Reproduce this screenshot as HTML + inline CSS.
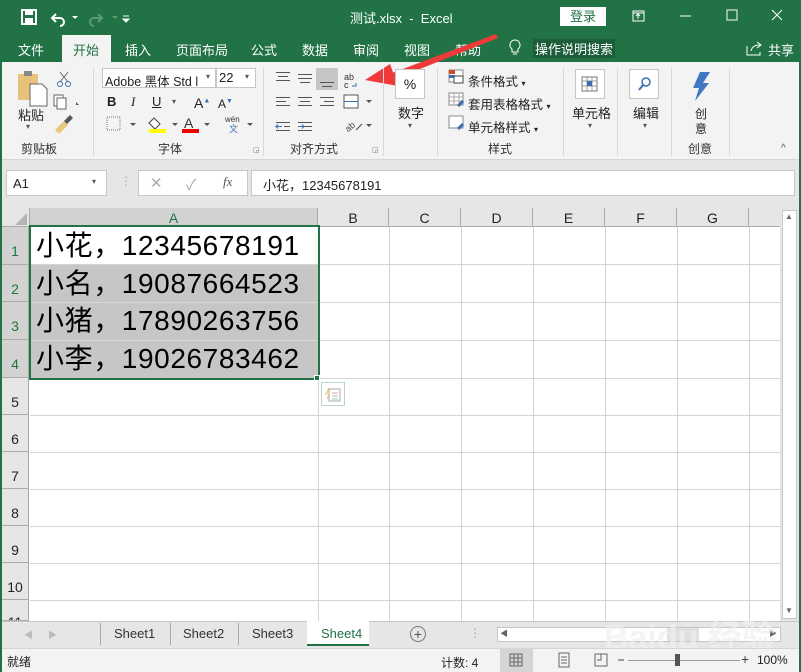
<!DOCTYPE html>
<html><head><meta charset="utf-8"><style>
*{margin:0;padding:0;box-sizing:border-box}
body{width:801px;height:672px;overflow:hidden;position:relative;background:#fff;font-family:"Liberation Sans","Noto Sans CJK SC",sans-serif;font-size:12px;color:#222}
.a{position:absolute}
.t{position:absolute;white-space:nowrap}
.vl{position:absolute;width:1px;background:#d4d4d4}
.hl{position:absolute;height:1px;background:#d4d4d4}
.ch{position:absolute;top:208px;height:19px;text-align:center;font-size:14px;color:#222;line-height:20px;border-right:1px solid #ababab;border-bottom:1px solid #ababab;background:#e6e6e6}
.rh{position:absolute;left:2px;width:27px;text-align:center;font-size:14px;color:#222;border-bottom:1px solid #ababab;border-right:1px solid #ababab;background:#e6e6e6;padding-top:16px}
.cell{position:absolute;left:30px;width:288px;font-size:28px;color:#000;padding-left:6px;line-height:37px;letter-spacing:0.6px}
.sep{position:absolute;top:68px;width:1px;height:88px;background:#d8d8d8}
.lbl{position:absolute;top:140px;font-size:12px;color:#333}
.tab{position:absolute;top:40px;color:#fff;font-size:13px;white-space:nowrap}
</style></head><body>
<div class="a" style="left:0;top:0;width:801px;height:62px;background:#217346"></div>
<svg class="a" style="left:20px;top:8px" width="120" height="20">
<rect x="2" y="2" width="14" height="14" fill="none" stroke="#fff" stroke-width="2"/><rect x="5" y="2" width="8" height="5" fill="#fff"/><rect x="5" y="10" width="8" height="6" fill="#fff"/>
<path d="M36 6 l-4 4 l4 4 M32 10 h8 a4 4 0 0 1 0 8" fill="none" stroke="#fff" stroke-width="2"/>
<path d="M52 8 l3 3 l3-3z" fill="#fff"/>
<path d="M78 6 l4 4 l-4 4 M82 10 h-8 a4 4 0 0 0 0 8" fill="none" stroke="#5c9a77" stroke-width="2"/>
<path d="M92 8 l3 3 l3-3z" fill="#5c9a77"/>
<path d="M103 8 h6 M103 11 l3 3 l3-3z" fill="#fff" stroke="#fff"/>
</svg>
<div class="t" style="left:350px;top:8px;color:#fff;font-size:13px">测试.xlsx&nbsp; -&nbsp; Excel</div>
<div class="a" style="left:560px;top:7px;width:46px;height:19px;background:#fff;color:#217346;text-align:center;font-size:13px;line-height:19px">登录</div>
<svg class="a" style="left:630px;top:6px" width="170" height="22">
<rect x="3" y="5" width="11" height="10" fill="none" stroke="#fff"/><path d="M3 7h11 M8 13v-5 l-2 2 M8 8l2 2" stroke="#fff" fill="none"/>
<path d="M50 10h11" stroke="#fff"/>
<rect x="97" y="4" width="10" height="10" fill="none" stroke="#fff"/>
<path d="M142 4l10 10 M152 4l-10 10" stroke="#fff"/>
</svg>
<div class="a" style="left:62px;top:35px;width:49px;height:27px;background:#f3f3f3"></div>
<div class="tab" style="left:18px">文件</div>
<div class="tab" style="left:73px;color:#217346">开始</div>
<div class="tab" style="left:125px">插入</div>
<div class="tab" style="left:176px">页面布局</div>
<div class="tab" style="left:251px">公式</div>
<div class="tab" style="left:302px">数据</div>
<div class="tab" style="left:353px">审阅</div>
<div class="tab" style="left:404px">视图</div>
<div class="tab" style="left:455px">帮助</div>
<svg class="a" style="left:508px;top:39px" width="14" height="18"><path d="M7 1a5 5 0 0 0-3 9v3h6v-3a5 5 0 0 0-3-9z M5 15h4" fill="none" stroke="#fff"/></svg>
<div class="t" style="left:533px;top:39px;color:#fff;font-size:13px;background:#1c5e3a;padding:0 2px">操作说明搜索</div>
<svg class="a" style="left:745px;top:40px" width="18" height="16"><path d="M2 6v9h13v-3 M6 11c1-5 5-6 9-6 M12 2l4 3-4 3" fill="none" stroke="#fff"/></svg>
<div class="tab" style="left:768px">共享</div>
<div class="a" style="left:0;top:62px;width:801px;height:98px;background:#f3f3f3;border-bottom:1px solid #d5d5d5"></div>
<div class="a" style="left:0;top:62px;width:2px;height:610px;background:#217346"></div>
<div class="a" style="right:0;top:62px;width:2px;height:610px;background:#217346"></div>
<svg class="a" style="left:16px;top:70px" width="60" height="40">
<rect x="2" y="4" width="20" height="26" fill="#e8c27a"/><rect x="8" y="1" width="8" height="5" fill="#888"/><path d="M14 14h12l5 5v17h-17z" fill="#fff" stroke="#666"/>
<path d="M44 2l8 10 M52 2l-8 10" stroke="#666"/><circle cx="44" cy="14" r="2.5" fill="none" stroke="#3a6fb0"/><circle cx="52" cy="14" r="2.5" fill="none" stroke="#3a6fb0"/>
</svg>
<div class="t" style="left:18px;top:105px;font-size:13px">粘贴</div>
<div class="t" style="left:26px;top:122px;font-size:8px;color:#555">▾</div>
<svg class="a" style="left:52px;top:93px" width="30" height="40"><rect x="2" y="2" width="9" height="11" fill="#fff" stroke="#666"/><rect x="5" y="5" width="9" height="11" fill="#fff" stroke="#666"/><path d="M24 9l3 3-3 0z" fill="#555"/><path d="M3 37l9-9 4 4-9 9z" fill="#e9c77e"/><path d="M12 28l6-6 3 3-6 6z" fill="#555"/></svg>
<div class="lbl" style="left:21px">剪贴板</div>
<div class="sep" style="left:93px"></div>
<div class="a" style="left:102px;top:68px;width:114px;height:20px;background:#fff;border:1px solid #c6c6c6"></div>
<div class="t" style="left:105px;top:71px;font-size:12.5px">Adobe 黑体 Std l</div>
<div class="t" style="left:206px;top:72px;font-size:8px;color:#555">▾</div>
<div class="a" style="left:216px;top:68px;width:40px;height:20px;background:#fff;border:1px solid #c6c6c6"></div>
<div class="t" style="left:219px;top:70px;font-size:13px">22</div>
<div class="t" style="left:245px;top:72px;font-size:8px;color:#555">▾</div>
<div class="t" style="left:107px;top:94px;font-size:13px;font-weight:bold">B</div>
<div class="t" style="left:131px;top:94px;font-size:13px;font-style:italic;font-family:'Liberation Serif'">I</div>
<div class="t" style="left:152px;top:94px;font-size:13px;text-decoration:underline">U</div>
<div class="t" style="left:172px;top:97px;font-size:8px;color:#555">▾</div>
<div class="t" style="left:194px;top:95px;font-size:14px">A<sup style="font-size:7px;color:#3a6fb0">▲</sup></div>
<div class="t" style="left:218px;top:97px;font-size:12px">A<sup style="font-size:7px;color:#3a6fb0">▼</sup></div>
<svg class="a" style="left:104px;top:114px" width="170" height="22">
<rect x="3" y="3" width="13" height="13" fill="none" stroke="#777" stroke-dasharray="1,1"/><path d="M26 9l3 3 3-3z" fill="#555"/>
<path d="M50 4l6 6-5 5-6-6z" fill="#fff" stroke="#444"/><rect x="45" y="15" width="17" height="4" fill="#ffff00"/><path d="M68 9l3 3 3-3z" fill="#555"/>
<text x="80" y="14" font-size="14" fill="#333" font-family="Liberation Sans">A</text><rect x="78" y="15" width="17" height="4" fill="#e00"/><path d="M100 9l3 3 3-3z" fill="#555"/>
<text x="121" y="8" font-size="8" fill="#333" font-family="Liberation Sans">wén</text><text x="125" y="18" font-size="9" fill="#3a6fb0" font-family="Noto Sans CJK SC">文</text><path d="M143 9l3 3 3-3z" fill="#555"/>
</svg>
<div class="lbl" style="left:158px">字体</div>
<div class="t" style="left:253px;top:146px;font-size:7px;color:#777">◲</div>
<div class="sep" style="left:263px"></div>
<div class="a" style="left:316px;top:68px;width:22px;height:22px;background:#c6c6c6"></div>
<svg class="a" style="left:272px;top:68px" width="110" height="66">
<g stroke="#555"><path d="M4 4.5h14M6 8.5h10M4 12.5h14"/><path d="M26 8.5h14M26 12.5h14M28 16.5h10" transform="translate(0,-2)"/><path d="M48 14.5h14M50 18.5h10"/>
<path d="M4 29.5h14M4 33.5h10M4 37.5h14M26 29.5h14M28 33.5h10M26 37.5h14M48 29.5h14M52 33.5h10M48 37.5h14"/>
<path d="M4 54.5h14M12 58.5h6M4 62.5h14M26 54.5h14M32 58.5h8M26 62.5h14"/></g>
<path d="M10 58.5h-6 l2-2 m-2 2 l2 2 M26 58.5h6 l-2-2 m2 2 l-2 2" stroke="#3a6fb0" fill="none"/>
<text x="72" y="12" font-size="9" fill="#333" font-family="Liberation Sans">ab</text><text x="72" y="20" font-size="9" fill="#333" font-family="Liberation Sans">c</text><path d="M84 15v3h-4" stroke="#3a6fb0" fill="none"/>
<rect x="72" y="27" width="14" height="13" fill="#fff" stroke="#555"/><path d="M72 33.5h14" stroke="#3a6fb0"/><path d="M94 32l3 3 3-3z" fill="#555"/>
<text x="72" y="63" font-size="9" fill="#444" transform="rotate(-40 76 58)" font-family="Liberation Sans">ab</text><path d="M84 62l6-6" stroke="#444"/><path d="M94 56l3 3 3-3z" fill="#555"/>
</svg>
<div class="lbl" style="left:290px">对齐方式</div>
<div class="t" style="left:372px;top:146px;font-size:7px;color:#777">◲</div>
<svg class="a" style="left:360px;top:30px" width="140" height="60"><path d="M136 4 L24 46 L27 52 L138 8z" fill="#f03a3a"/><path d="M5 50 L30 34 L38 56z" fill="#f03a3a"/></svg>
<div class="sep" style="left:383px"></div>
<div class="a" style="left:395px;top:69px;width:30px;height:30px;background:#fff;border:1px solid #c6c6c6;text-align:center;font-size:14px;line-height:28px">%</div>
<div class="t" style="left:398px;top:103px;font-size:13px">数字</div>
<div class="t" style="left:408px;top:121px;font-size:8px;color:#555">▾</div>
<div class="sep" style="left:437px"></div>
<svg class="a" style="left:448px;top:69px" width="18" height="64"><rect x="1" y="1" width="14" height="12" fill="#fff" stroke="#888"/><rect x="1" y="1" width="6" height="4" fill="#d04a2a"/><rect x="1" y="6" width="6" height="3" fill="#3a6fb0"/><rect x="6" y="7" width="9" height="7" fill="#fff" stroke="#444"/>
<rect x="1" y="24" width="14" height="12" fill="#fff" stroke="#888"/><path d="M1 28h14M1 32h14M6 24v12M11 24v12" stroke="#aaa"/><path d="M10 37l5-5" stroke="#3a6fb0" stroke-width="3"/>
<rect x="1" y="47" width="14" height="12" fill="#fff" stroke="#888"/><path d="M10 60l5-5" stroke="#3a6fb0" stroke-width="3"/></svg>
<div class="t" style="left:468px;top:71px;font-size:12.5px">条件格式 <span style="font-size:8px">▾</span></div>
<div class="t" style="left:468px;top:94px;font-size:12.5px">套用表格格式 <span style="font-size:8px">▾</span></div>
<div class="t" style="left:468px;top:117px;font-size:12.5px">单元格样式 <span style="font-size:8px">▾</span></div>
<div class="lbl" style="left:488px">样式</div>
<div class="sep" style="left:563px"></div>
<div class="a" style="left:575px;top:69px;width:30px;height:30px;background:#fff;border:1px solid #c6c6c6"></div>
<svg class="a" style="left:581px;top:75px" width="20" height="20"><rect x="1" y="2" width="15" height="14" fill="none" stroke="#777"/><path d="M1 6h15M1 11h15M6 2v14M11 2v14" stroke="#999"/><rect x="6" y="6" width="5" height="5" fill="#3a6fb0"/></svg>
<div class="t" style="left:572px;top:103px;font-size:13px">单元格</div>
<div class="t" style="left:588px;top:121px;font-size:8px;color:#555">▾</div>
<div class="sep" style="left:617px"></div>
<div class="a" style="left:629px;top:69px;width:30px;height:30px;background:#fff;border:1px solid #c6c6c6"></div>
<svg class="a" style="left:636px;top:75px" width="18" height="18"><circle cx="10" cy="7" r="4" fill="none" stroke="#3a6fb0" stroke-width="1.5"/><path d="M7 10l-4 5" stroke="#3a6fb0" stroke-width="2"/></svg>
<div class="t" style="left:633px;top:103px;font-size:13px">编辑</div>
<div class="t" style="left:643px;top:121px;font-size:8px;color:#555">▾</div>
<div class="sep" style="left:671px"></div>
<svg class="a" style="left:690px;top:71px" width="22" height="32"><path d="M10 1h10l-7 11h6l-14 18 4-13h-6z" fill="#3f78c0"/></svg>
<div class="t" style="left:695px;top:105px;font-size:12px">创</div>
<div class="t" style="left:695px;top:120px;font-size:12px">意</div>
<div class="lbl" style="left:688px">创意</div>
<div class="sep" style="left:729px"></div>
<div class="t" style="left:781px;top:143px;font-size:10px;color:#555">^</div>
<div class="a" style="left:2px;top:160px;width:797px;height:48px;background:#e6e6e6"></div>
<div class="a" style="left:6px;top:170px;width:101px;height:26px;background:#fff;border:1px solid #c6c6c6"></div>
<div class="t" style="left:13px;top:176px;font-size:13px">A1</div>
<div class="t" style="left:92px;top:177px;font-size:8px;color:#555">▾</div>
<div class="t" style="left:120px;top:174px;font-size:12px;color:#aaa">⋮</div>
<div class="a" style="left:138px;top:170px;width:110px;height:26px;background:#fff;border:1px solid #c6c6c6"></div>
<div class="t" style="left:150px;top:174px;font-size:15px;color:#aaa">✕</div>
<div class="t" style="left:186px;top:174px;font-size:15px;color:#aaa">✓</div>
<div class="t" style="left:223px;top:174px;font-size:13px;font-style:italic;font-family:'Liberation Serif';color:#555">fx</div>
<div class="a" style="left:251px;top:170px;width:544px;height:26px;background:#fff;border:1px solid #c6c6c6"></div>
<div class="t" style="left:263px;top:175px;font-size:13px">小花，12345678191</div>
<div class="a" style="left:2px;top:208px;width:28px;height:19px;background:#e6e6e6;border-right:1px solid #ababab;border-bottom:1px solid #ababab"></div>
<svg class="a" style="left:14px;top:212px" width="14" height="14"><path d="M13 1v12h-12z" fill="#b4b4b4"/></svg>
<div class="ch" style="left:30px;width:288px;background:#d2d2d2;color:#217346;border-bottom:2px solid #217346">A</div>
<div class="ch" style="left:318px;width:71px">B</div>
<div class="ch" style="left:389px;width:72px">C</div>
<div class="ch" style="left:461px;width:72px">D</div>
<div class="ch" style="left:533px;width:72px">E</div>
<div class="ch" style="left:605px;width:72px">F</div>
<div class="ch" style="left:677px;width:72px">G</div>
<div class="ch" style="left:749px;width:31px;border-right:none"></div>
<div class="rh" style="top:227px;height:38px;background:#d2d2d2;color:#217346">1</div>
<div class="rh" style="top:265px;height:37px;background:#d2d2d2;color:#217346">2</div>
<div class="rh" style="top:302px;height:38px;background:#d2d2d2;color:#217346">3</div>
<div class="rh" style="top:340px;height:38px;background:#d2d2d2;color:#217346">4</div>
<div class="rh" style="top:378px;height:37px">5</div>
<div class="rh" style="top:415px;height:37px">6</div>
<div class="rh" style="top:452px;height:37px">7</div>
<div class="rh" style="top:489px;height:37px">8</div>
<div class="rh" style="top:526px;height:37px">9</div>
<div class="rh" style="top:563px;height:37px">10</div>
<div class="rh" style="top:600px;height:21px;padding-top:14px;overflow:hidden">11</div>
<div class="vl" style="left:318px;top:227px;height:394px"></div>
<div class="vl" style="left:389px;top:227px;height:394px"></div>
<div class="vl" style="left:461px;top:227px;height:394px"></div>
<div class="vl" style="left:533px;top:227px;height:394px"></div>
<div class="vl" style="left:605px;top:227px;height:394px"></div>
<div class="vl" style="left:677px;top:227px;height:394px"></div>
<div class="vl" style="left:749px;top:227px;height:394px"></div>
<div class="hl" style="left:30px;top:264px;width:750px"></div>
<div class="hl" style="left:30px;top:302px;width:750px"></div>
<div class="hl" style="left:30px;top:340px;width:750px"></div>
<div class="hl" style="left:30px;top:378px;width:750px"></div>
<div class="hl" style="left:30px;top:415px;width:750px"></div>
<div class="hl" style="left:30px;top:452px;width:750px"></div>
<div class="hl" style="left:30px;top:489px;width:750px"></div>
<div class="hl" style="left:30px;top:526px;width:750px"></div>
<div class="hl" style="left:30px;top:563px;width:750px"></div>
<div class="hl" style="left:30px;top:600px;width:750px"></div>
<div class="a" style="left:30px;top:265px;width:288px;height:113px;background:#c6c6c6"></div>
<div class="hl" style="left:30px;top:302px;width:288px;background:#d8d8d8"></div>
<div class="hl" style="left:30px;top:340px;width:288px;background:#d8d8d8"></div>
<div class="cell" style="top:227px">小花，12345678191</div>
<div class="cell" style="top:265px">小名，19087664523</div>
<div class="cell" style="top:302px">小猪，17890263756</div>
<div class="cell" style="top:340px">小李，19026783462</div>
<div class="a" style="left:29px;top:225px;width:291px;height:155px;border:2px solid #217346"></div>
<div class="a" style="left:314px;top:375px;width:6px;height:6px;background:#217346;border:1px solid #fff"></div>
<div class="a" style="left:321px;top:382px;width:24px;height:24px;border:1px solid #b8d8c6;background:#fff"></div>
<svg class="a" style="left:325px;top:386px" width="18" height="18"><rect x="4" y="3" width="11" height="12" fill="#fff" stroke="#aaa"/><path d="M7 7h6" stroke="#e4a0a0"/><path d="M7 10h6" stroke="#a0b8d8"/><path d="M7 13h6" stroke="#a0d0b0"/><path d="M4 2l-3 6h3l-2 5" stroke="#f0c080" fill="none"/></svg>
<div class="a" style="left:780px;top:208px;width:19px;height:413px;background:#e6e6e6"></div>
<div class="a" style="left:782px;top:210px;width:15px;height:409px;background:#fff;border:1px solid #c6c6c6"></div>
<div class="t" style="left:785px;top:212px;font-size:8px;color:#666">▲</div>
<div class="t" style="left:785px;top:606px;font-size:8px;color:#666">▼</div>
<div class="a" style="left:2px;top:621px;width:797px;height:27px;background:#e6e6e6;border-top:1px solid #c6c6c6"></div>
<div class="t" style="left:24px;top:628px;font-size:9px;color:#bbb">◀&nbsp;&nbsp;&nbsp;&nbsp;&nbsp;&nbsp;▶</div>
<div class="a" style="left:100px;top:623px;width:1px;height:22px;background:#aaa"></div>
<div class="t" style="left:114px;top:626px;font-size:13px;color:#333">Sheet1</div>
<div class="a" style="left:170px;top:623px;width:1px;height:22px;background:#aaa"></div>
<div class="t" style="left:183px;top:626px;font-size:13px;color:#333">Sheet2</div>
<div class="a" style="left:238px;top:623px;width:1px;height:22px;background:#aaa"></div>
<div class="t" style="left:252px;top:626px;font-size:13px;color:#333">Sheet3</div>
<div class="a" style="left:307px;top:621px;width:62px;height:25px;background:#fff;border-bottom:2px solid #217346"></div>
<div class="t" style="left:321px;top:626px;font-size:13px;color:#217346">Sheet4</div>
<div class="a" style="left:410px;top:626px;width:16px;height:16px;border:1px solid #777;border-radius:50%;text-align:center;line-height:14px;font-size:14px;color:#555">+</div>
<div class="t" style="left:469px;top:626px;font-size:12px;color:#aaa">⋮</div>
<div class="a" style="left:497px;top:627px;width:284px;height:15px;background:#fff;border:1px solid #c6c6c6"></div>
<div class="a" style="left:667px;top:628px;width:32px;height:13px;background:#e0e0e0"></div>
<div class="t" style="left:500px;top:628px;font-size:8px;color:#666">◀</div>
<div class="t" style="left:769px;top:628px;font-size:8px;color:#666">▶</div>
<div class="t" style="left:604px;top:610px;font-size:34px;color:#f0f0f0;font-weight:bold;opacity:0.7">Baidu 经验</div>
<div class="a" style="left:2px;top:648px;width:797px;height:24px;background:#f3f3f3;border-top:1px solid #d5d5d5"></div>
<div class="t" style="left:7px;top:653px;font-size:12px">就绪</div>
<div class="t" style="left:441px;top:654px;font-size:12px">计数: 4</div>
<div class="a" style="left:500px;top:649px;width:33px;height:23px;background:#d4d4d4"></div>
<svg class="a" style="left:508px;top:652px" width="180" height="18"><rect x="2" y="2" width="12" height="12" fill="none" stroke="#666"/><path d="M2 6h12M2 10h12M6 2v12M10 2v12" stroke="#666"/>
<rect x="51" y="1" width="10" height="14" fill="none" stroke="#666"/><path d="M53 5h6M53 8h6M53 11h6" stroke="#666"/>
<path d="M87 2h12v12h-12z M93 2v6h-4" fill="none" stroke="#666"/>
<path d="M110 8h6" stroke="#444"/></svg>
<div class="a" style="left:628px;top:660px;width:50px;height:1px;background:#999"></div>
<div class="a" style="left:675px;top:654px;width:5px;height:12px;background:#555"></div>
<div class="a" style="left:680px;top:660px;width:60px;height:1px;background:#999"></div>
<div class="t" style="left:741px;top:651px;font-size:14px;color:#444">+</div>
<div class="t" style="left:757px;top:653px;font-size:12px">100%</div>
</body></html>
